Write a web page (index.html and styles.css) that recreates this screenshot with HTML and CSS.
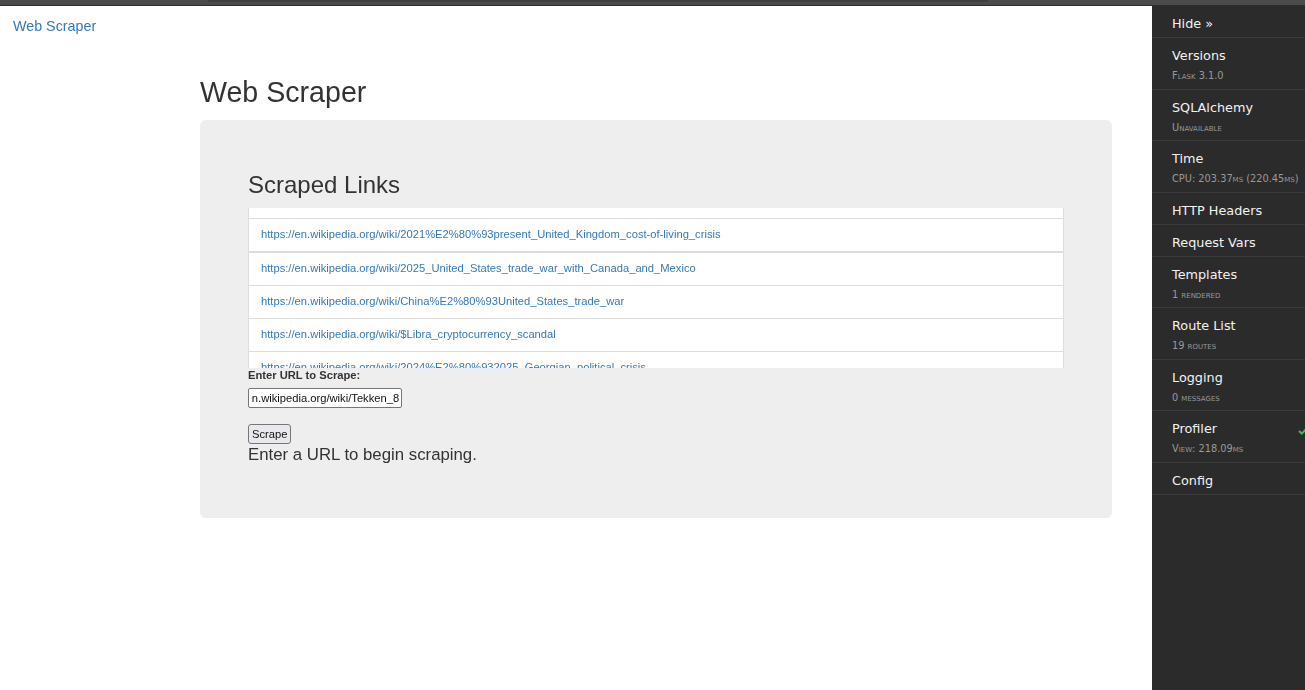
FILE: index.html
```html
<!DOCTYPE html>
<html lang="en">
<head>
<meta charset="utf-8">
<title>Web Scraper</title>
<link rel="stylesheet" href="styles.css">
</head>
<body>
<div class="chrome-bar"><div class="chrome-track"></div></div>
<nav class="navbar"><a class="brand" href="#">Web Scraper</a></nav>
<main class="container">
  <h1 class="page-title">Web Scraper</h1>
  <section class="jumbotron">
    <h2 class="section-title">Scraped Links</h2>
    <div class="link-scroll" id="linkScroll">
      <ul class="link-list">
        <li class="link-item"><a href="#">https://en.wikipedia.org/wiki/Main_Page</a></li>
        <li class="link-item link-item--gap"><a href="#">https://en.wikipedia.org/wiki/2021%E2%80%93present_United_Kingdom_cost-of-living_crisis</a></li>
        <li class="link-item"><a href="#">https://en.wikipedia.org/wiki/2025_United_States_trade_war_with_Canada_and_Mexico</a></li>
        <li class="link-item"><a href="#">https://en.wikipedia.org/wiki/China%E2%80%93United_States_trade_war</a></li>
        <li class="link-item"><a href="#">https://en.wikipedia.org/wiki/$Libra_cryptocurrency_scandal</a></li>
        <li class="link-item"><a href="#">https://en.wikipedia.org/wiki/2024%E2%80%932025_Georgian_political_crisis</a></li>
        <li class="link-item"><a href="#">https://en.wikipedia.org/wiki/Tekken_8</a></li>
      </ul>
    </div>
    <form class="scrape-form">
      <label class="form-label" for="url">Enter URL to Scrape:</label>
      <input class="url-input" id="url" type="text" value="https://en.wikipedia.org/wiki/Tekken_8">
      <button class="btn-scrape" type="button">Scrape</button>
    </form>
    <p class="status">Enter a URL to begin scraping.</p>
  </section>
</main>

<aside class="debug-toolbar">
  <ul class="tb-list">
    <li class="tb-item"><span class="tb-title">Hide &raquo;</span></li>
    <li class="tb-item"><span class="tb-title">Versions</span><small class="tb-sub">Flask 3.1.0</small></li>
    <li class="tb-item"><span class="tb-title">SQLAlchemy</span><small class="tb-sub">Unavailable</small></li>
    <li class="tb-item"><span class="tb-title">Time</span><small class="tb-sub">CPU: 203.37ms (220.45ms)</small></li>
    <li class="tb-item"><span class="tb-title">HTTP Headers</span></li>
    <li class="tb-item"><span class="tb-title">Request Vars</span></li>
    <li class="tb-item"><span class="tb-title">Templates</span><small class="tb-sub">1 rendered</small></li>
    <li class="tb-item"><span class="tb-title">Route List</span><small class="tb-sub">19 routes</small></li>
    <li class="tb-item"><span class="tb-title">Logging</span><small class="tb-sub">0 messages</small></li>
    <li class="tb-item"><span class="tb-title">Profiler</span><small class="tb-sub">View: 218.09ms</small>
      <svg class="tb-check" width="10" height="8" viewBox="0 0 10 8"><path d="M1 4 L3.8 6.6 L9 1.2" fill="none" stroke="#3fbf3f" stroke-width="2"/></svg>
    </li>
    <li class="tb-item"><span class="tb-title">Config</span></li>
  </ul>
</aside>
<script src="script.js"></script>
</body>
</html>
```

FILE: styles.css
```css
html, body {
  margin: 0;
  padding: 0;
  background: #fff;
}
body {
  font-family: "Liberation Sans", Helvetica, Arial, sans-serif;
  font-size: 14px;
  line-height: 20px;
  color: #333;
}

.chrome-bar {
  height: 5px;
  background: #4b4b4b;
  border-bottom: 1px solid #2c2c2c;
  padding-left: 208px;
}
.chrome-track {
  width: 780px;
  height: 2px;
  background: #3f3f3f;
}

.navbar {
  padding: 10px 13px 0;
}
.brand {
  color: #337ab7;
  text-decoration: none;
  font-size: 14.3px;
  line-height: 20px;
}

.container {
  margin-left: 200px;
  width: 912px;
}
.page-title {
  margin: 41px 0 11.5px;
  font-size: 28.6px;
  line-height: 31.5px;
  font-weight: normal;
  color: #333;
}

.jumbotron {
  background: #eeeeee;
  border-radius: 6px;
  padding: 52px 48px 53px;
}
.section-title {
  margin: 0 0 9.6px;
  font-size: 24px;
  line-height: 26.4px;
  font-weight: normal;
  color: #333;
}

.link-scroll {
  height: 160px;
  overflow-y: auto;
  scrollbar-width: none;
  background: #fff;
}
.link-list {
  list-style: none;
  margin: 0;
  padding: 0;
}
.link-item {
  border: 1px solid #dddddd;
  margin-bottom: -1px;
  padding: 7px 12px 9px;
  font-size: 11.2px;
  line-height: 16px;
  background: #fff;
  white-space: nowrap;
}
.link-item--gap {
  margin-bottom: 0;
}
.link-item a {
  color: #337ab7;
  text-decoration: none;
}

.scrape-form {
  display: flex;
  flex-direction: column;
  align-items: flex-start;
}
.form-label {
  margin-top: 1px;
  font-size: 11.2px;
  line-height: 13px;
  font-weight: bold;
  color: #333;
}
.url-input {
  margin-top: 6px;
  box-sizing: border-box;
  width: 154px;
  height: 20px;
  padding: 1px 2px;
  border: 1px solid #767676;
  border-radius: 2px;
  font-family: "Liberation Sans", Arial, sans-serif;
  font-size: 11.2px;
  color: #111;
  background: #fff;
}
.btn-scrape {
  margin-top: 16px;
  box-sizing: border-box;
  height: 20px;
  padding: 1px 3px;
  border: 1px solid #767676;
  border-radius: 3px;
  background: #e9e9ed;
  font-family: "Liberation Sans", Arial, sans-serif;
  font-size: 11.2px;
  color: #111;
}
.status {
  margin: 0;
  font-size: 16.8px;
  line-height: 21px;
  color: #333;
}

.debug-toolbar {
  position: fixed;
  top: 6px;
  right: 0;
  bottom: 0;
  width: 153px;
  background: #2b2b2b;
  overflow: hidden;
  font-family: "DejaVu Sans", sans-serif;
}
.tb-list {
  list-style: none;
  margin: 0;
  padding: 0;
}
.tb-item {
  position: relative;
  border-bottom: 1px solid #3a3a3a;
  padding: 10px 8px 5px 20px;
  white-space: nowrap;
}
.tb-title {
  display: block;
  font-size: 12.8px;
  line-height: 16px;
  color: #f2f2f2;
}
.tb-sub {
  display: block;
  margin-top: 2px;
  margin-bottom: -1.5px;
  font-size: 9.8px;
  line-height: 19px;
  color: #999;
  font-variant: small-caps;
}
.tb-check {
  position: absolute;
  right: -3px;
  top: 16px;
}
```

FILE: script.js
```js
document.getElementById('linkScroll').scrollTop = 23;
var urlInput = document.getElementById('url');
urlInput.scrollLeft = urlInput.scrollWidth;
```
